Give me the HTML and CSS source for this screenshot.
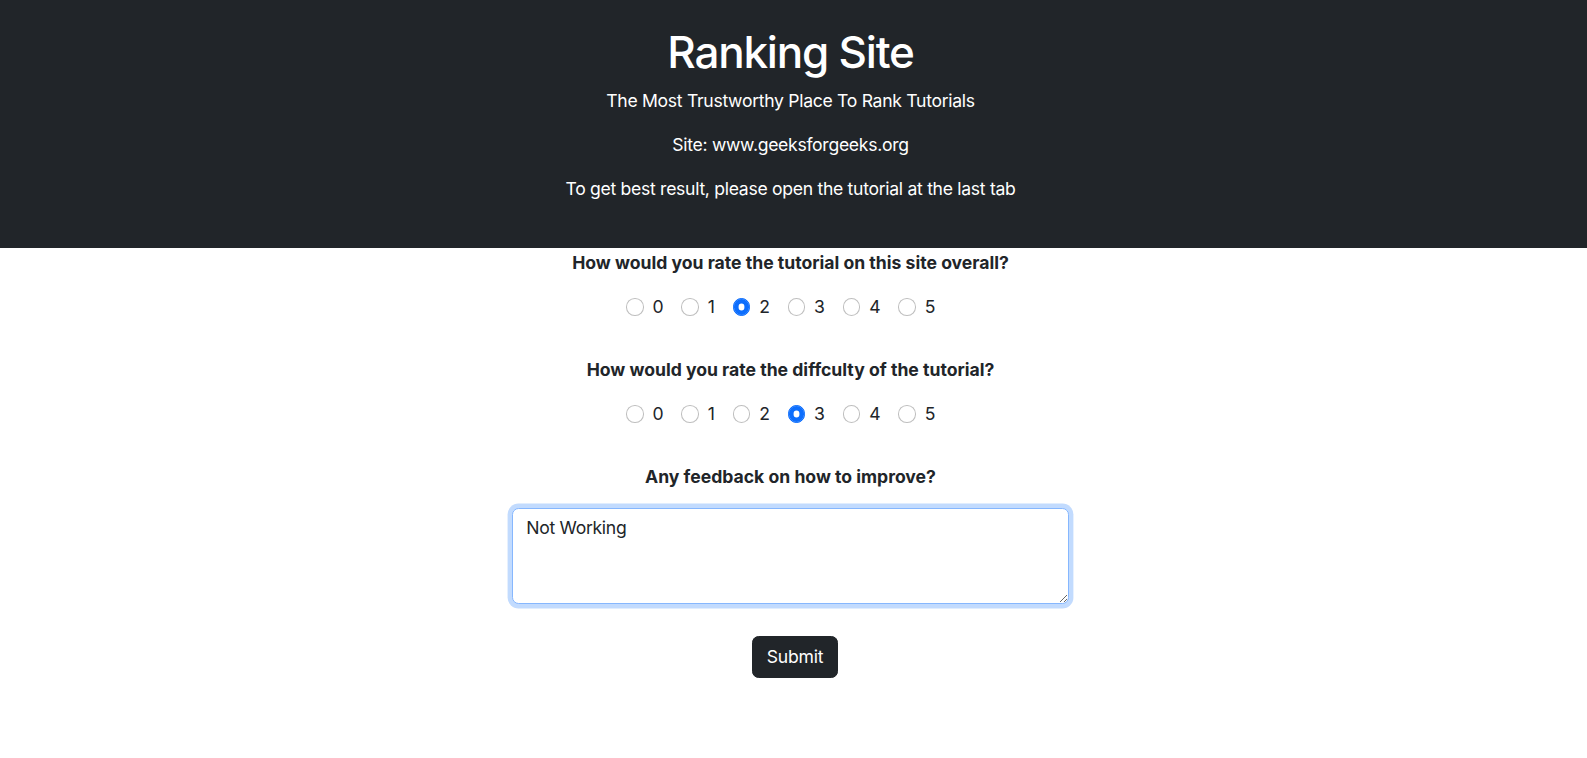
FILE: index.html
```html
<!DOCTYPE html>
<html lang="en">
<head>
<meta charset="utf-8">
<title>Ranking Site</title>
<link rel="stylesheet" href="styles.css">
</head>
<body>
<header class="hero">
  <h1 class="hero-title">Ranking Site</h1>
  <p class="hero-text">The Most Trustworthy Place To Rank Tutorials</p>
  <p class="hero-text">Site: www.geeksforgeeks.org</p>
  <p class="hero-text">To get best result, please open the tutorial at the last tab</p>
</header>
<main class="survey">
  <div class="question">
    <div class="q-label">How would you rate the tutorial on this site overall?</div>
    <div class="options">
      <label class="opt"><input type="radio" name="overall" value="0"><span>0</span></label>
      <label class="opt"><input type="radio" name="overall" value="1"><span>1</span></label>
      <label class="opt"><input type="radio" name="overall" value="2" checked><span>2</span></label>
      <label class="opt"><input type="radio" name="overall" value="3"><span>3</span></label>
      <label class="opt"><input type="radio" name="overall" value="4"><span>4</span></label>
      <label class="opt"><input type="radio" name="overall" value="5"><span>5</span></label>
    </div>
  </div>
  <div class="question">
    <div class="q-label">How would you rate the diffculty of the tutorial?</div>
    <div class="options">
      <label class="opt"><input type="radio" name="difficulty" value="0"><span>0</span></label>
      <label class="opt"><input type="radio" name="difficulty" value="1"><span>1</span></label>
      <label class="opt"><input type="radio" name="difficulty" value="2"><span>2</span></label>
      <label class="opt"><input type="radio" name="difficulty" value="3" checked><span>3</span></label>
      <label class="opt"><input type="radio" name="difficulty" value="4"><span>4</span></label>
      <label class="opt"><input type="radio" name="difficulty" value="5"><span>5</span></label>
    </div>
  </div>
  <div class="question last">
    <div class="q-label">Any feedback on how to improve?</div>
    <textarea class="feedback" rows="3">Not Working</textarea>
  </div>
  <button class="submit" type="button">Submit</button>
</main>
</body>
</html>
```
FILE: styles.css
```css
* { box-sizing: border-box; }
html, body { margin: 0; padding: 0; }
body {
  font-family: Inter, "Noto Sans", "Liberation Sans", sans-serif;
  font-size: 17.6px;
  line-height: 26.4px;
  color: #212529;
  background: #fff;
}
.hero {
  background: #212529;
  color: #fff;
  text-align: center;
  padding: 26.4px 6px 28px 0;
}
.hero-title {
  margin: 0 0 8.8px;
  font-size: 44px;
  line-height: 52.8px;
  font-weight: 500;
  letter-spacing: -1.2px;
}
.hero-text {
  margin: 0 0 17.6px;
  letter-spacing: -0.3px;
}
.hero-text:last-child { margin-bottom: 0; padding-bottom: 17.6px; }
.survey {
  display: flex;
  flex-direction: column;
  align-items: center;
  padding: 1.8px 6px 0 0;
}
.question {
  display: flex;
  flex-direction: column;
  align-items: center;
  margin-bottom: 36.6px;
}
.question.last { margin-bottom: 32.5px; }
.q-label {
  font-weight: 700;
  margin-bottom: 17.6px;
}
.options {
  display: flex;
  margin-left: -2px;
}
.opt {
  display: flex;
  align-items: center;
  margin-right: 17.6px;
  height: 26.4px;
}
.opt input {
  appearance: none;
  -webkit-appearance: none;
  width: 17.6px;
  height: 17.6px;
  margin: 0 9px 0 0;
  border: 1.1px solid rgba(0,0,0,.25);
  border-radius: 50%;
  background: #fff;
}
.opt input:checked {
  background: #0d6efd;
  border-color: #0d6efd;
  box-shadow: inset 0 0 0 4.6px #0d6efd, inset 0 0 0 9px #fff;
}
.feedback {
  display: block;
  width: 557px;
  height: 96px;
  margin: 0;
  padding: 6.6px 13.2px;
  font-family: inherit;
  font-size: 17.6px;
  line-height: 26.4px;
  letter-spacing: -0.3px;
  color: #212529;
  border: 1.1px solid #86b7fe;
  border-radius: 6.6px;
  box-shadow: 0 0 0 4.4px rgba(13,110,253,.25);
  outline: none;
}
.submit {
  font-family: inherit;
  font-size: 17.6px;
  line-height: 26.4px;
  letter-spacing: -0.2px;
  color: #fff;
  background: #212529;
  border: 1.1px solid #212529;
  border-radius: 6.6px;
  padding: 6.6px 13.2px;
  height: 42px;
  margin-left: 9px;
}
```
